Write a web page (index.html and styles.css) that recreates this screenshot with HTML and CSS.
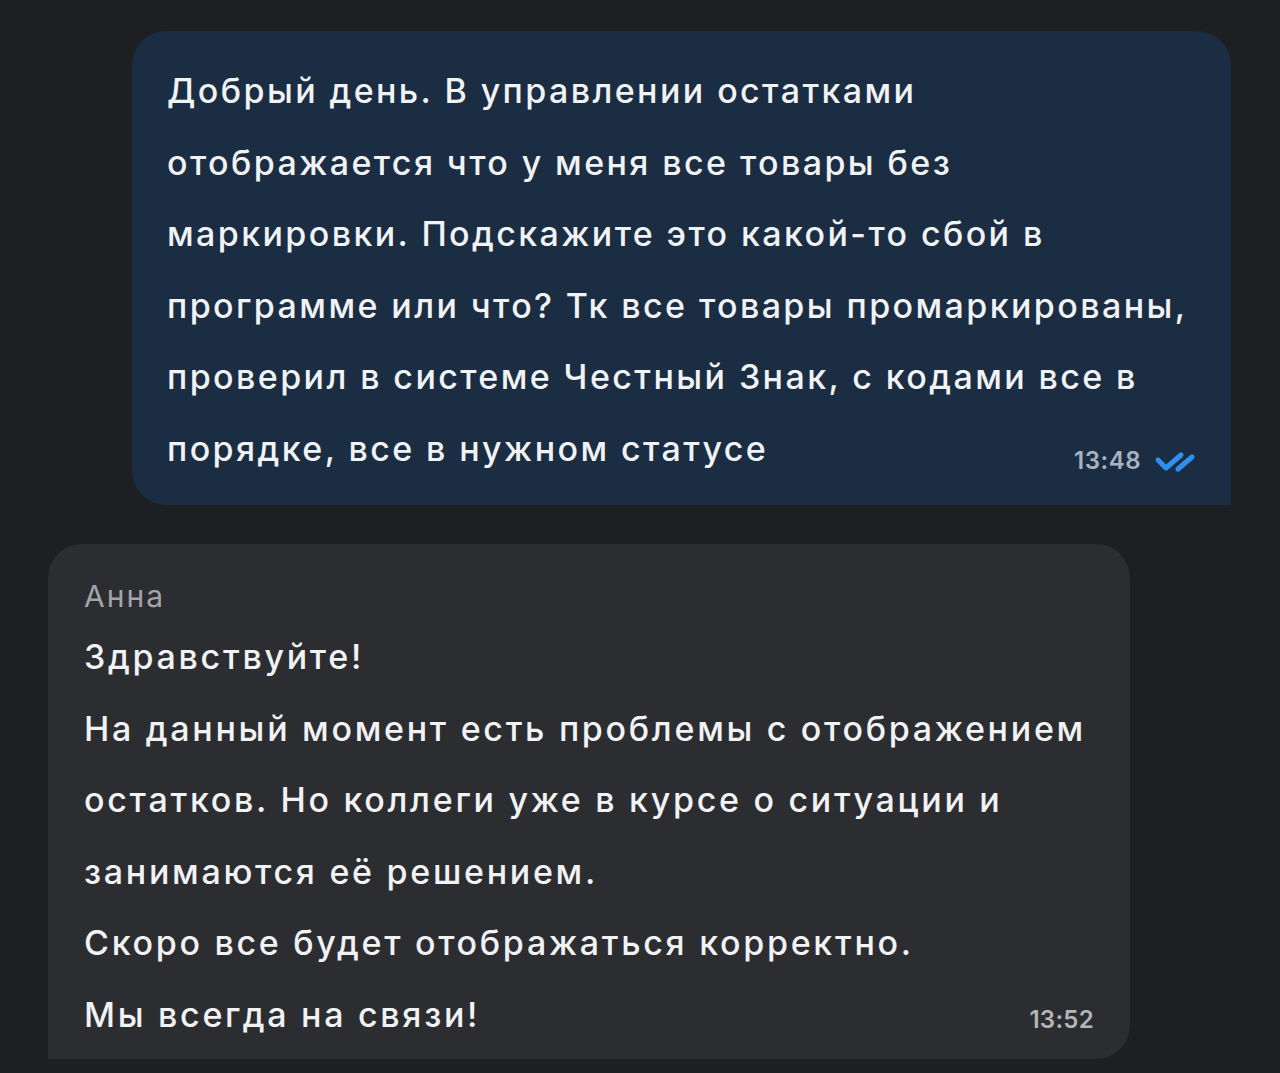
FILE: index.html
```html
<!DOCTYPE html>
<html lang="ru">
<head>
<meta charset="utf-8">
<link rel="stylesheet" href="styles.css">
</head>
<body>
<div class="chat">
  <div class="bubble out">
    <div class="line">Добрый день. В управлении остатками</div>
    <div class="line">отображается что у меня все товары без</div>
    <div class="line">маркировки. Подскажите это какой-то сбой в</div>
    <div class="line">программе или что? Тк все товары промаркированы,</div>
    <div class="line">проверил в системе Честный Знак, с кодами все в</div>
    <div class="line last"><span>порядке, все в нужном статусе</span>
      <span class="meta"><span class="time">13:48</span>
        <svg class="ticks" width="44" height="26" viewBox="0 0 44 26"><path d="M5 12 L13 20 L28 7" fill="none" stroke="#2d90ef" stroke-width="5" stroke-linecap="round" stroke-linejoin="round"/><path d="M25 21 L39 9" fill="none" stroke="#2d90ef" stroke-width="5" stroke-linecap="round"/></svg>
      </span>
    </div>
  </div>
  <div class="bubble in">
    <div class="name">Анна</div>
    <div class="line">Здравствуйте!</div>
    <div class="line">На данный момент есть проблемы с отображением</div>
    <div class="line">остатков. Но коллеги уже в курсе о ситуации и</div>
    <div class="line">занимаются её решением.</div>
    <div class="line">Скоро все будет отображаться корректно.</div>
    <div class="line last"><span>Мы всегда на связи!</span>
      <span class="meta"><span class="time">13:52</span></span>
    </div>
  </div>
</div>
</body>
</html>
```
FILE: styles.css
```css
html, body {
  margin: 0;
  padding: 0;
  background: #1e1f23;
  height: 1073px;
  overflow: hidden;
}
body {
  font-family: "Inter", "Noto Sans", sans-serif;
  color: #f1f2f4;
}
.chat {
  display: flex;
  flex-direction: column;
  padding-top: 31px;
  gap: 39px;
}
.bubble {
  box-sizing: border-box;
}
.out {
  margin-left: 132px;
  width: 1099px;
  height: 474px;
  background: #1b2d42;
  border-radius: 34px 34px 0 34px;
  padding: 24px 34px 20px 35px;
}
.in {
  margin-left: 48px;
  width: 1082px;
  height: 515px;
  background: #2c2d31;
  border-radius: 34px 34px 34px 0;
  padding: 30px 36px 0 36px;
}
.line {
  font-size: 34px;
  font-weight: 500;
  line-height: 71.6px;
  white-space: nowrap;
  letter-spacing: 2.4px;
}
.in .line {
  letter-spacing: 2.7px;
}
.name {
  font-size: 30px;
  color: #a3a4a9;
  line-height: 44px;
  margin-bottom: 3px;
  letter-spacing: 2px;
}
.last {
  display: flex;
  justify-content: space-between;
  align-items: baseline;
}
.meta {
  display: flex;
  align-items: center;
  gap: 12px;
  position: relative;
  top: 8px;
}
.in .meta {
  top: 1px;
}
.time {
  font-size: 24px;
  font-weight: 600;
  color: #a8b3c1;
  letter-spacing: 0.5px;
}
.in .time {
  color: #b4b5b9;
  letter-spacing: 0.3px;
}
.ticks {
  display: block;
}
```
